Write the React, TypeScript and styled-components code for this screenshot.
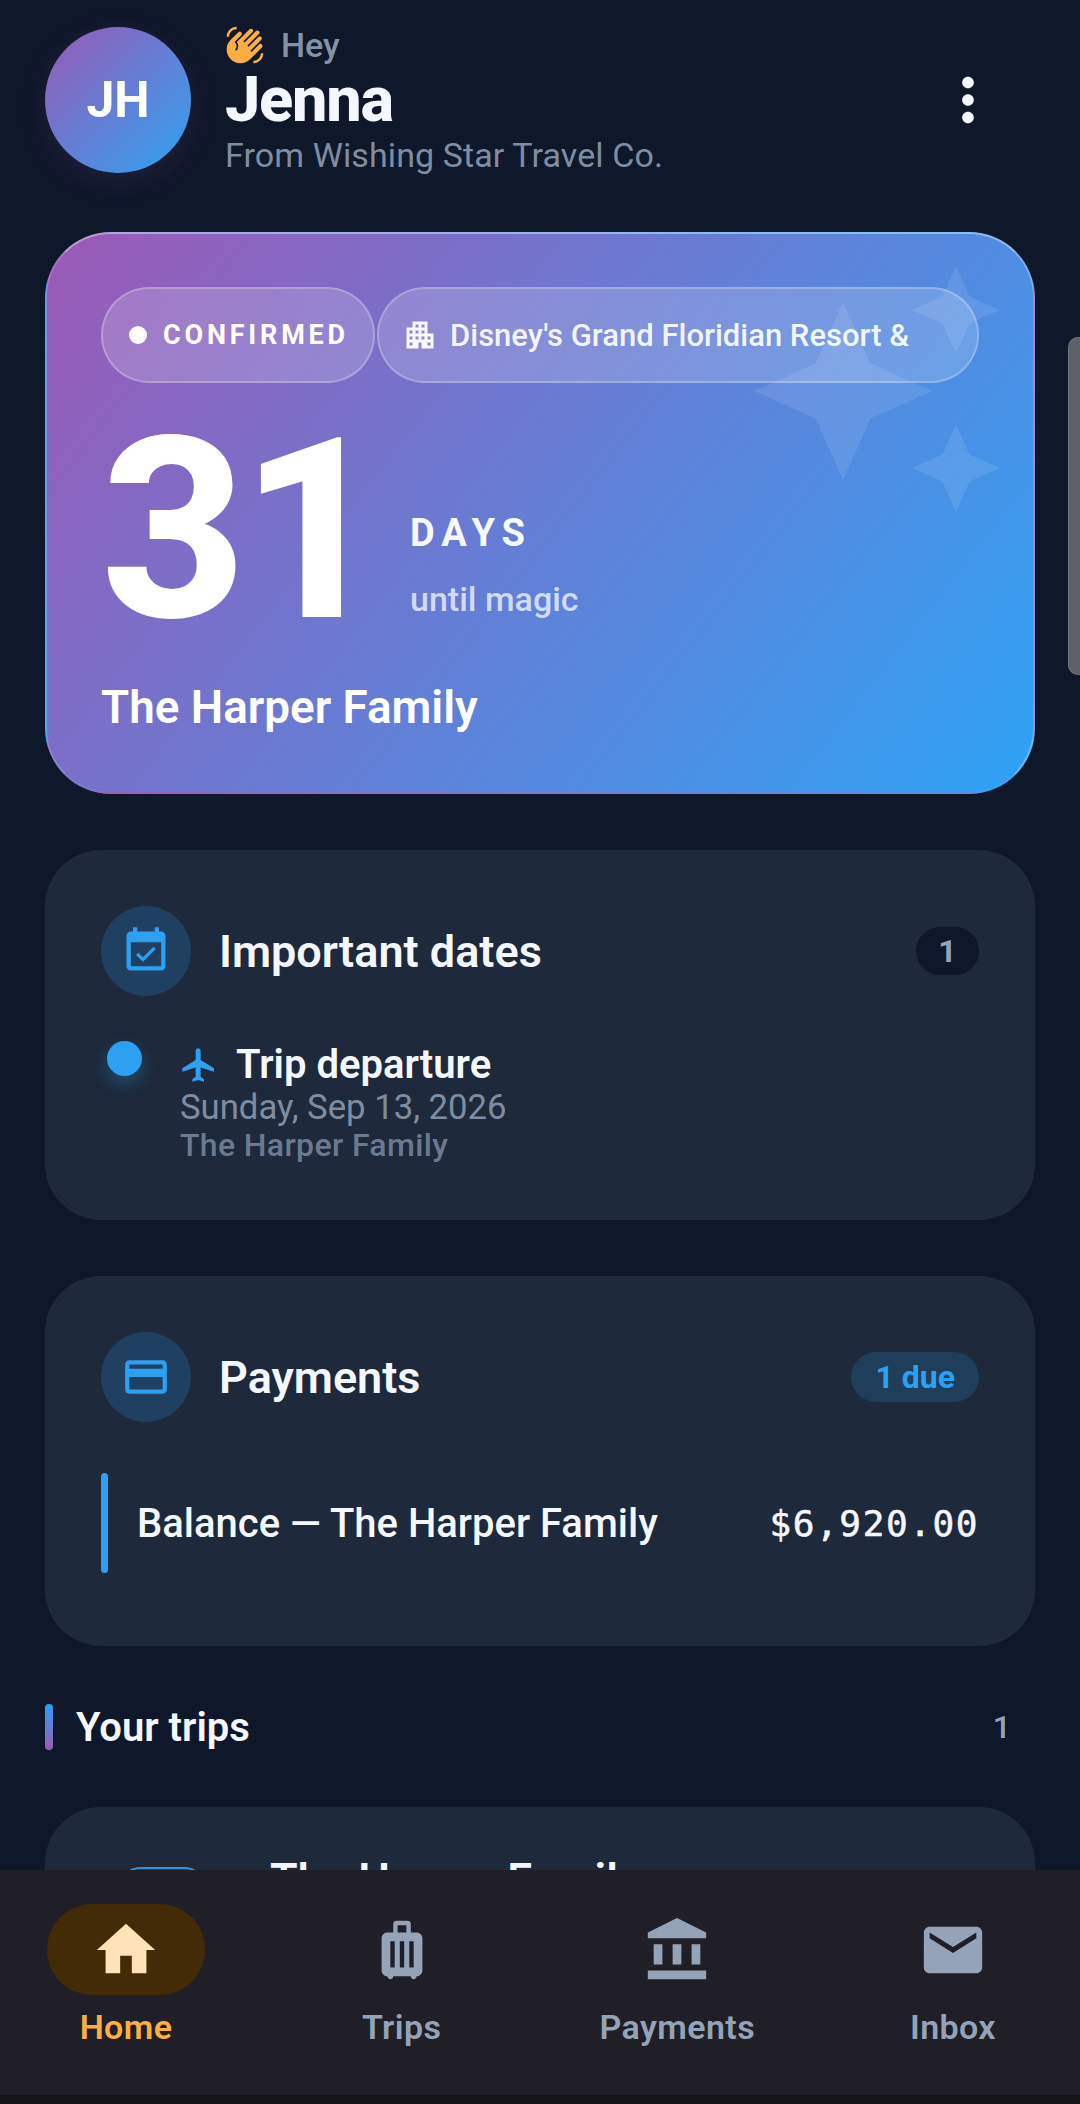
import React, { FC } from "react";
import styled, { createGlobalStyle } from "styled-components";
import {
  MdAccountBalance,
  MdApartment,
  MdEventAvailable,
  MdFlight,
  MdHome,
  MdLuggage,
  MdMail,
  MdMoreVert,
  MdOutlineCreditCard,
  MdWavingHand,
} from "react-icons/md";

const GlobalStyle = createGlobalStyle`
  html, body {
    margin: 0;
    padding: 0;
    background: #0f172a;
  }
  body {
    font-family: Roboto, "Noto Sans", sans-serif;
    color: #f1f5f9;
  }
`;

const Screen = styled.div`
  position: relative;
  display: flex;
  flex-direction: column;
  width: 1080px;
  height: 2104px;
  overflow: hidden;
  background: #0f172a;
`;

const Scroll = styled.main`
  flex: 1;
  min-height: 0;
  overflow: hidden;
  padding: 25px 45px 0;
`;

const Header = styled.header`
  display: flex;
  align-items: center;
  height: 150px;
`;

const Avatar = styled.div`
  display: flex;
  align-items: center;
  justify-content: center;
  width: 146px;
  height: 146px;
  border-radius: 50%;
  background: linear-gradient(135deg, #9b59b6, #2ea3f2);
  box-shadow: 0 8px 30px rgba(155, 89, 182, 0.12);
  font-size: 50px;
  font-weight: 700;
  color: #fff;
`;

const Greeting = styled.div`
  flex: 1;
  margin-left: 34px;
`;

const HeyRow = styled.div`
  display: flex;
  align-items: center;
  gap: 16px;
  height: 40px;
  font-size: 34px;
  font-weight: 500;
  color: #8492a6;
  svg {
    color: #fbae42;
  }
`;

const Name = styled.div`
  height: 70px;
  font-size: 63px;
  line-height: 70px;
  font-weight: 800;
  letter-spacing: -1.2px;
  color: #f4f7fb;
`;

const Agency = styled.div`
  height: 40px;
  font-size: 34px;
  line-height: 40px;
  letter-spacing: 0.1px;
  color: #7f8da3;
`;

const MenuButton = styled.div`
  display: flex;
  margin-right: 32px;
  color: #f4f7fb;
`;

const Hero = styled.section`
  position: relative;
  box-sizing: border-box;
  height: 562px;
  margin-top: 57px;
  padding: 53px 54px 0;
  border: 2px solid;
  border-color: rgba(255, 255, 255, 0.38) rgba(255, 255, 255, 0.25)
    rgba(255, 255, 255, 0.05) rgba(255, 255, 255, 0.14);
  border-radius: 66px;
  overflow: hidden;
  background: linear-gradient(128deg, #9b59b6 0%, #2ea3f5 100%);
`;

const Sparkle = styled.svg<{ $top: number; $right: number; $size: number }>`
  position: absolute;
  top: ${(p) => p.$top}px;
  right: ${(p) => p.$right}px;
  width: ${(p) => p.$size}px;
  height: ${(p) => p.$size}px;
  fill: rgba(255, 255, 255, 0.1);
`;

const ChipRow = styled.div`
  position: relative;
  display: flex;
  gap: 2px;
`;

const Chip = styled.div`
  box-sizing: border-box;
  display: flex;
  align-items: center;
  height: 96px;
  border: 2px solid rgba(255, 255, 255, 0.24);
  border-radius: 48px;
  background: rgba(255, 255, 255, 0.17);
  white-space: nowrap;
  color: #fff;
`;

const StatusChip = styled(Chip)`
  width: 274px;
  padding-left: 26px;
  gap: 16px;
  font-size: 27px;
  font-weight: 700;
  letter-spacing: 3.8px;
`;

const StatusDot = styled.span`
  width: 18px;
  height: 18px;
  border-radius: 50%;
  background: #fff;
`;

const ResortChip = styled(Chip)`
  width: 602px;
  padding-left: 23px;
  gap: 12px;
  font-size: 31px;
  font-weight: 500;
  color: rgba(255, 255, 255, 0.93);
`;

const Countdown = styled.div`
  display: flex;
  align-items: flex-end;
  height: 234px;
  margin-top: 31px;
`;

const BigNumber = styled.div`
  width: 309px;
  height: 234px;
  font-size: 252px;
  line-height: 234px;
  font-weight: 800;
  letter-spacing: -6px;
  color: #fff;
`;

const CountdownCopy = styled.div`
  display: flex;
  flex-direction: column;
  padding-bottom: 27px;
`;

const DaysLabel = styled.div`
  font-size: 38px;
  line-height: 44px;
  font-weight: 700;
  letter-spacing: 7px;
  color: #f6f8fc;
`;

const UntilLabel = styled.div`
  margin-top: 22px;
  font-size: 34px;
  line-height: 44px;
  font-weight: 500;
  color: rgba(255, 255, 255, 0.72);
`;

const FamilyLabel = styled.div`
  margin-top: 34px;
  font-size: 45.8px;
  line-height: 52px;
  font-weight: 600;
  color: #fff;
`;

const Card = styled.section`
  box-sizing: border-box;
  height: 370px;
  margin-top: 56px;
  padding: 56px;
  border-radius: 56px;
  background: #1e293b;
`;

const CardHead = styled.div`
  display: flex;
  align-items: center;
  height: 90px;
`;

const IconCircle = styled.div`
  display: flex;
  align-items: center;
  justify-content: center;
  flex: none;
  width: 90px;
  height: 90px;
  border-radius: 50%;
  background: #1f4061;
  color: #2ea0f2;
`;

const CardTitle = styled.h2`
  flex: 1;
  margin: 2px 0 0 28px;
  font-size: 45px;
  line-height: 52px;
  font-weight: 600;
  color: #f4f7fb;
`;

const CountBadge = styled.div<{ $accent?: boolean }>`
  display: flex;
  align-items: center;
  justify-content: center;
  height: ${(p) => (p.$accent ? 50 : 48)}px;
  min-width: 63px;
  padding: 0 ${(p) => (p.$accent ? 24 : 0)}px;
  border-radius: 25px;
  background: ${(p) => (p.$accent ? "#1f3e5c" : "#0f172a")};
  font-size: 32px;
  font-weight: 700;
  color: ${(p) => (p.$accent ? "#2ea0f2" : "#94a3b8")};
`;

const DateRow = styled.div`
  display: flex;
  margin-top: 44px;
`;

const DateDot = styled.span`
  flex: none;
  width: 35px;
  height: 35px;
  margin: 1px 0 0 6px;
  border-radius: 50%;
  background: #2ea0f2;
  box-shadow: 0 8px 18px rgba(46, 160, 242, 0.3);
`;

const DateCopy = styled.div`
  margin-left: 38px;
`;

const DateTitle = styled.div`
  box-sizing: border-box;
  display: flex;
  align-items: center;
  gap: 17px;
  height: 46px;
  padding-top: 3px;
  font-size: 40px;
  font-weight: 600;
  color: #f4f7fb;
  svg {
    margin-left: -1px;
    color: #2ea0f2;
  }
`;

const DateValue = styled.div`
  height: 41px;
  margin-top: 1px;
  font-size: 34.7px;
  line-height: 41px;
  color: #7f8da3;
`;

const DateOwner = styled.div`
  height: 36px;
  margin-top: -1px;
  font-size: 32px;
  line-height: 36px;
  font-weight: 500;
  color: #6b7a90;
  letter-spacing: 0.35px;
`;

const BalanceRow = styled.div`
  display: flex;
  align-items: center;
  height: 100px;
  margin-top: 51px;
`;

const BalanceBar = styled.span`
  align-self: stretch;
  width: 7px;
  border-radius: 4px;
  background: #2ea0f2;
`;

const BalanceName = styled.div`
  flex: 1;
  margin-left: 29px;
  font-size: 40px;
  font-weight: 500;
  color: #f4f7fb;
`;

// no medium cut of the mono font, so thicken the regular one a little
const BalanceAmount = styled.div`
  font-family: "DejaVu Sans Mono", "Liberation Mono", monospace;
  font-size: 36px;
  letter-spacing: 1.6px;
  -webkit-text-stroke: 0.6px #f4f7fb;
  color: #f4f7fb;
`;

const SectionHead = styled.div`
  display: flex;
  align-items: center;
  height: 46px;
  margin-top: 58px;
`;

const SectionBar = styled.span`
  align-self: stretch;
  width: 8px;
  border-radius: 4px;
  background: linear-gradient(180deg, #2ea0f2, #9b59b6);
`;

const SectionTitle = styled.div`
  flex: 1;
  margin: 1px 0 0 23px;
  font-size: 40px;
  font-weight: 600;
  color: #f4f7fb;
`;

const SectionCount = styled.div`
  margin-right: 24px;
  font-size: 32px;
  font-weight: 500;
  color: #94a3b8;
`;

const TripCard = styled.section`
  display: flex;
  height: 300px;
  margin-top: 57px;
  padding: 60px 75px 0;
  border-radius: 56px;
  background: #1e293b;
`;

const TripThumb = styled.div`
  flex: none;
  width: 85px;
  height: 85px;
  border-radius: 20px;
  background: linear-gradient(180deg, #1f4061, #1e3a55);
  box-shadow: inset 0 2px 0 #3d8fd0;
`;

const TripName = styled.div`
  margin: -13px 0 0 65px;
  font-size: 45px;
  line-height: 52px;
  font-weight: 600;
  color: #f4f7fb;
`;

const Nav = styled.nav`
  display: flex;
  justify-content: space-between;
  flex: none;
  box-sizing: border-box;
  height: 225px;
  padding: 34px 48px 0 47px;
  background: #201f27;
`;

const NavItem = styled.div<{ $active?: boolean }>`
  display: flex;
  flex-direction: column;
  align-items: center;
  width: 158px;
  font-size: 34px;
  line-height: 40px;
  font-weight: 600;
  letter-spacing: 0.4px;
  color: ${(p) => (p.$active ? "#fbae42" : "#94a3b8")};
  white-space: nowrap;
`;

const NavIcon = styled.div<{ $active?: boolean }>`
  display: flex;
  align-items: center;
  justify-content: center;
  width: 158px;
  height: 91px;
  margin-bottom: 12px;
  border-radius: 46px;
  background: ${(p) => (p.$active ? "#422b06" : "transparent")};
  color: ${(p) => (p.$active ? "#ffe2b8" : "#94a3b8")};
`;

const GestureStrip = styled.div`
  flex: none;
  height: 9px;
  background: #131318;
`;

const ScrollThumb = styled.div`
  position: absolute;
  top: 337px;
  right: 0;
  box-sizing: border-box;
  width: 12px;
  height: 338px;
  border: 1px solid #71747c;
  border-right: 0;
  border-radius: 10px 0 0 10px;
  background: #5d6069;
`;

const STAR = "M12 0 L15.7 8.3 L24 12 L15.7 15.7 L12 24 L8.3 15.7 L0 12 L8.3 8.3 Z";

const navItems = [
  { label: "Home", Icon: MdHome, active: true },
  { label: "Trips", Icon: MdLuggage },
  { label: "Payments", Icon: MdAccountBalance },
  { label: "Inbox", Icon: MdMail },
];

const sparkles = [
  { top: 68, right: 101, size: 178 },
  { top: 32, right: 33, size: 88 },
  { top: 190, right: 33, size: 88 },
];

const App: FC = () => (
  <Screen>
    <GlobalStyle />
    <Scroll>
      <Header>
        <Avatar>JH</Avatar>
        <Greeting>
          <HeyRow>
            <MdWavingHand size={40} />
            Hey
          </HeyRow>
          <Name>Jenna</Name>
          <Agency>From Wishing Star Travel Co.</Agency>
        </Greeting>
        <MenuButton>
          <MdMoreVert size={70} />
        </MenuButton>
      </Header>

      <Hero>
        {sparkles.map((s) => (
          <Sparkle key={s.top} viewBox="0 0 24 24" $top={s.top} $right={s.right} $size={s.size}>
            <path d={STAR} />
          </Sparkle>
        ))}
        <ChipRow>
          <StatusChip>
            <StatusDot />
            CONFIRMED
          </StatusChip>
          <ResortChip>
            <MdApartment size={36} />
            Disney's Grand Floridian Resort &amp;
          </ResortChip>
        </ChipRow>
        <Countdown>
          <BigNumber>31</BigNumber>
          <CountdownCopy>
            <DaysLabel>DAYS</DaysLabel>
            <UntilLabel>until magic</UntilLabel>
          </CountdownCopy>
        </Countdown>
        <FamilyLabel>The Harper Family</FamilyLabel>
      </Hero>

      <Card>
        <CardHead>
          <IconCircle>
            <MdEventAvailable size={52} />
          </IconCircle>
          <CardTitle>Important dates</CardTitle>
          <CountBadge>1</CountBadge>
        </CardHead>
        <DateRow>
          <DateDot />
          <DateCopy>
            <DateTitle>
              <MdFlight size={40} />
              Trip departure
            </DateTitle>
            <DateValue>Sunday, Sep 13, 2026</DateValue>
            <DateOwner>The Harper Family</DateOwner>
          </DateCopy>
        </DateRow>
      </Card>

      <Card>
        <CardHead>
          <IconCircle>
            <MdOutlineCreditCard size={50} />
          </IconCircle>
          <CardTitle>Payments</CardTitle>
          <CountBadge $accent>1 due</CountBadge>
        </CardHead>
        <BalanceRow>
          <BalanceBar />
          <BalanceName>Balance — The Harper Family</BalanceName>
          <BalanceAmount>$6,920.00</BalanceAmount>
        </BalanceRow>
      </Card>

      <SectionHead>
        <SectionBar />
        <SectionTitle>Your trips</SectionTitle>
        <SectionCount>1</SectionCount>
      </SectionHead>

      <TripCard>
        <TripThumb />
        <TripName>The Harper Family</TripName>
      </TripCard>
    </Scroll>

    <Nav>
      {navItems.map(({ label, Icon, active }) => (
        <NavItem key={label} $active={active}>
          <NavIcon $active={active}>
            <Icon size={70} />
          </NavIcon>
          {label}
        </NavItem>
      ))}
    </Nav>
    <GestureStrip />
    <ScrollThumb />
  </Screen>
);

export default App;
